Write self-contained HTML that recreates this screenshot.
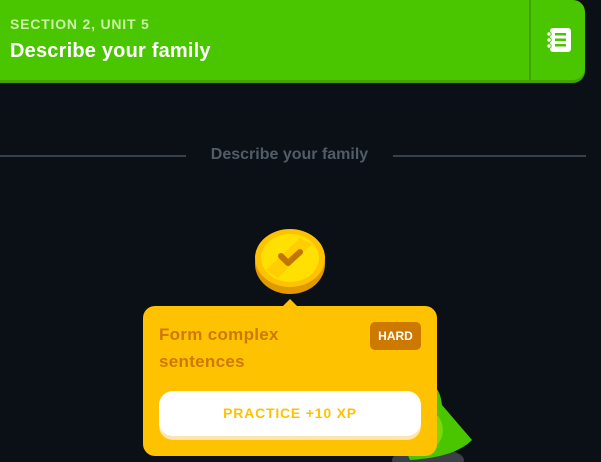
<!DOCTYPE html>
<html><head><style>
body{margin:0;width:601px;height:462px;background:#0a1016;overflow:hidden;position:relative;font-family:"Liberation Sans",sans-serif;font-weight:bold}
.hdr{position:absolute;left:0;top:0;width:585px;height:80px;background:#4ac600;border-radius:0 12px 12px 0;box-shadow:0 3px 0 #45a205}
.div{position:absolute;left:529px;top:0;width:2px;height:80px;background:#3fa300}
.t1{position:absolute;left:10px;top:16px;color:#c9f1a6;font-size:14px;letter-spacing:.8px}
.t2{position:absolute;left:10px;top:40px;color:#fff;font-size:20px;letter-spacing:.2px}
.line{position:absolute;top:155px;height:2px;background:#36404a}
.sec{position:absolute;left:186px;width:207px;top:146px;text-align:center;color:#515c66;font-size:16px}
.pop{position:absolute;left:143px;top:306px;width:294px;height:150px;background:#ffc200;border-radius:12px}
.arrow{position:absolute;left:282px;top:299px;width:0;height:0;border-left:8px solid transparent;border-right:8px solid transparent;border-bottom:8px solid #ffc200}
.pt{position:absolute;left:16px;top:15px;color:#cd7900;font-size:17px;line-height:27px;letter-spacing:.3px}
.hard{position:absolute;left:227px;top:16px;width:51px;height:28px;background:#cd7900;border-radius:5px;color:#fff;font-size:12px;text-align:center;line-height:28px}
.btn{position:absolute;left:16px;top:85px;width:262px;height:45px;background:#fff;border-radius:14px;box-shadow:0 4px 0 #fde5b0;color:#ffc200;text-align:center;line-height:45px;font-size:14px;letter-spacing:.8px}
</style></head><body>
<div class="hdr"></div><div class="div"></div>
<div class="t1">SECTION 2, UNIT 5</div>
<div class="t2">Describe your family</div>
<svg style="position:absolute;left:545px;top:28px" width="26" height="26" viewBox="0 0 26 26"><rect x="5" y="0" width="21" height="24" rx="3" fill="#fff"/><g fill="#4ac600"><rect x="10" y="5" width="11" height="2.5"/><rect x="10" y="10.5" width="11" height="2.5"/><rect x="10" y="16" width="11" height="2.5"/></g><g fill="#fff" stroke="#4ac600" stroke-width="1"><circle cx="4" cy="6" r="2.2"/><circle cx="4" cy="12" r="2.2"/><circle cx="4" cy="18" r="2.2"/></g></svg>
<div class="line" style="left:0;width:186px"></div>
<div class="line" style="left:393px;width:193px"></div>
<div class="sec">Describe your family</div>
<svg style="position:absolute;left:380px;top:380px" width="100" height="82" viewBox="0 0 100 82"><ellipse cx="48" cy="80" rx="36" ry="12" fill="#3b4047"/><path d="M30 80 C20 60 25 30 40 10 C50 0 60 5 62 25 L92 60 C80 72 60 78 30 80Z" fill="#4ac600"/><ellipse cx="45" cy="50" rx="18" ry="20" fill="#7ad900"/></svg>
<svg style="position:absolute;left:254px;top:228px" width="72" height="68" viewBox="0 0 72 68"><ellipse cx="36" cy="36" rx="35" ry="30" fill="#e09a00"/><ellipse cx="36" cy="30" rx="35" ry="29" fill="#ffc200"/><ellipse cx="36" cy="30" rx="29" ry="24" fill="#ffe000"/><path d="M12 42 L46 10 L58 16 L24 50Z" fill="#ffc200" opacity=".6"/><path d="M27 28 L34 35 L46 24" stroke="#c27500" stroke-width="6" fill="none" stroke-linecap="round" stroke-linejoin="round"/></svg>
<div class="arrow"></div>
<div class="pop">
<div class="pt">Form complex<br>sentences</div>
<div class="hard">HARD</div>
<div class="btn">PRACTICE +10 XP</div>
</div>
</body></html>
